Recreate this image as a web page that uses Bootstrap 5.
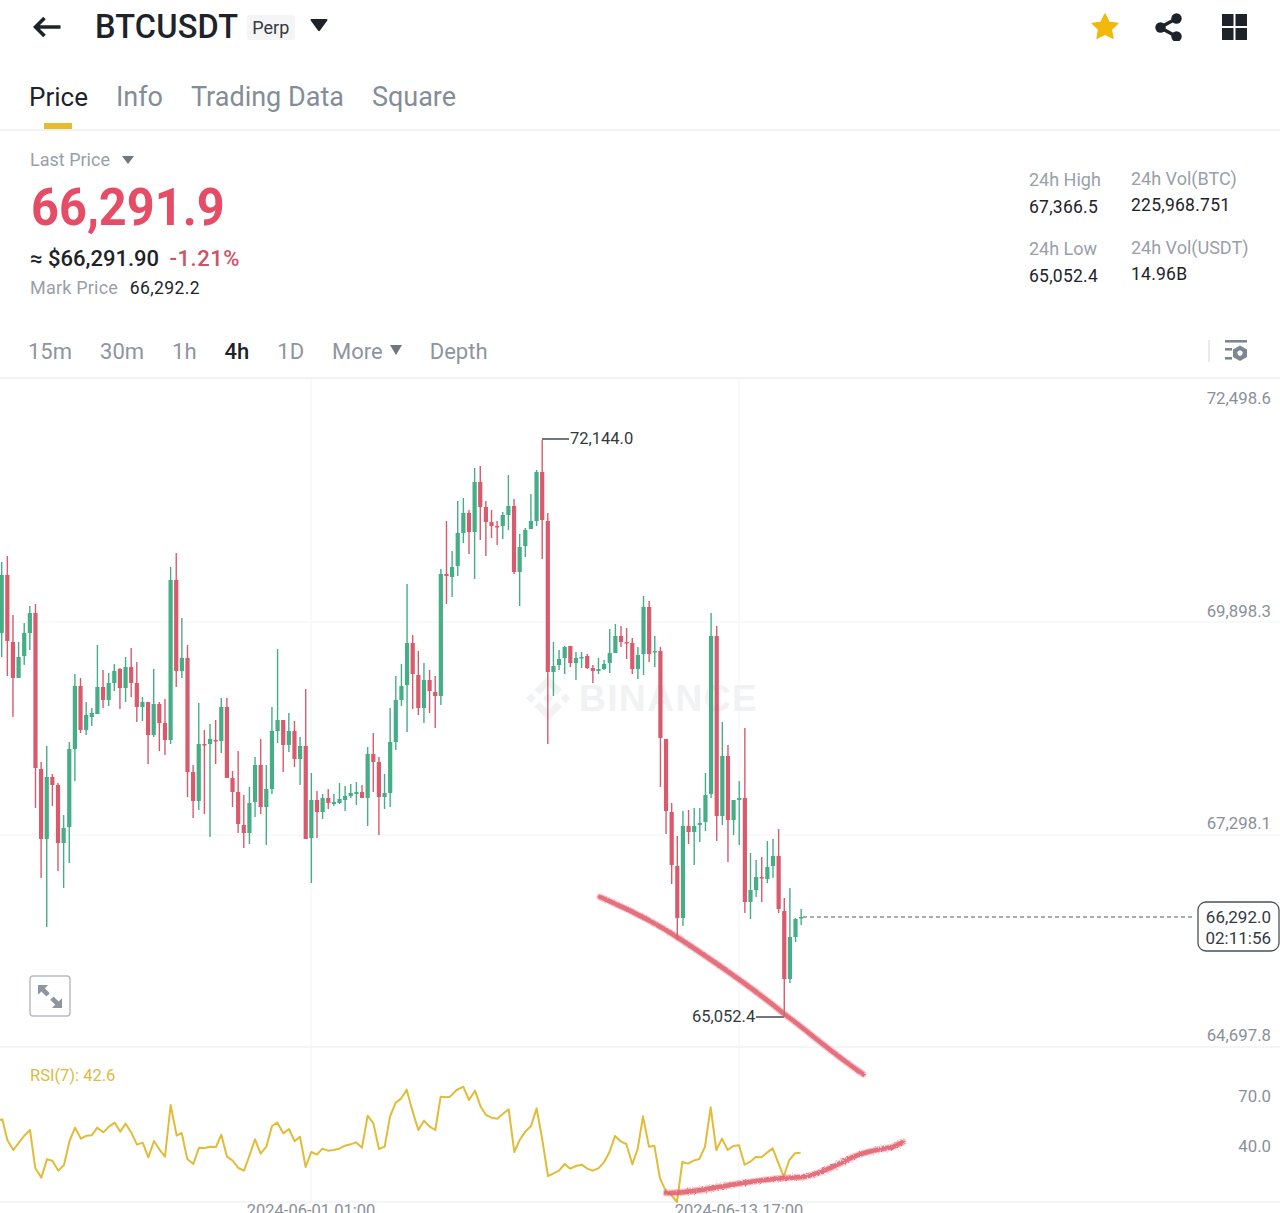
<!doctype html>
<html lang="en">
<head>
<meta charset="utf-8">
<meta name="viewport" content="width=device-width, initial-scale=1">
<title>BTCUSDT Perp</title>
<link href="https://cdn.jsdelivr.net/npm/bootstrap@5.3.5/dist/css/bootstrap.min.css" rel="stylesheet">
<style>
  html, body { height: 1213px; overflow: hidden; }
  body { font-family: Roboto, "Liberation Sans", sans-serif; color: #1e2329; background: #fff; }

  .top-bar { height: 54px; padding-left: 33px; }
  .pair-name { font-size: 32.5px; font-weight: 500; line-height: 1; margin-left: 34px; letter-spacing: .2px; }
  .perp-tag { background: #f5f5f5; color: #333a42; font-size: 18px; font-weight: 400; padding: 4px 6px 4px 5px; margin-left: 9px; border-radius: 3px; line-height: 17px; }
  .title-caret { margin-left: 15px; margin-top: -4px; }
  .top-icons { margin-left: auto; margin-right: 33px; gap: 36px; }
  .grid-icon { margin-left: 3px; }

  .tab-strip { height: 77px; padding-left: 29px; gap: 28px; border-bottom: 2px solid #f1f2f4; }
  .tab-strip .nav-link { padding: 0; margin-top: 25px; height: 36px; font-size: 27px; line-height: 36px; color: #838d99; position: relative; }
  .tab-strip .nav-link.active { color: #1e2329; font-size: 26px; }
  .tab-strip .nav-link.active::after { content: ""; position: absolute; left: 15px; width: 28px; height: 6px; top: 44px; background: #e8bb2e; }

  .price-summary { height: 193px; padding: 19px 30px 0; }
  .last-label { font-size: 18px; line-height: 20px; color: #99a0aa; }
  .last-value { font-size: 51px; font-weight: 700; line-height: 60px; color: #e54c65; margin: 8px 0 0 1px; transform: scaleX(.955); transform-origin: left; }
  .fiat-line { font-size: 22px; font-weight: 500; line-height: 26px; margin-top: 8px; }
  .fiat-change { color: #cf5166; margin-left: 5px; font-weight: 500; letter-spacing: .5px; }
  .mark-line { font-size: 18px; line-height: 24px; margin-top: 4px; color: #99a0aa; letter-spacing: .2px; }
  .mark-value { color: #1e2329; font-size: 17.5px; margin-left: 7px; letter-spacing: .4px; }

  .stat-grid { display: grid; grid-template-columns: 102px 119px; align-content: start; padding-top: 18px; white-space: nowrap; }
  .stat-cell { height: 69px; }
  .stat-label { font-size: 18px; line-height: 24px; color: #99a0aa; }
  .stat-value { font-size: 17.5px; line-height: 24px; margin-top: 3px; letter-spacing: .25px; }
  .stat-alt { margin-top: -1px; }
  .stat-alt .stat-value { margin-top: 2px; }

  .interval-row { height: 55px; padding: 3px 33px 0 28px; border-bottom: 2px solid #f1f2f4; font-size: 22px; color: #8d95a0; }
  .interval-list { gap: 28px; }
  .interval-row span { line-height: 28px; }
  .interval-row .active-interval { color: #1e2329; font-weight: 500; }
  .more-item { gap: 7px; }
  .interval-tools { gap: 15px; margin-top: -3px; }
  .interval-sep { width: 2px; height: 22px; background: #e9ebee; }

  .chart-box { display: block; width: 1280px; height: 834px; }
  .candle-group { filter: blur(.35px); }
  .axis-label { font: 400 16.8px Roboto, sans-serif; fill: #8a9099; text-anchor: end; }
  .tag-label { font: 400 17px Roboto, sans-serif; fill: #333a42; text-anchor: end; }
  .mark-label { font: 400 16.5px Roboto, sans-serif; fill: #333a42; }
  .rsi-label { font: 400 16.5px Roboto, sans-serif; fill: #dcbb40; }
  .date-label { font: 400 16.5px Roboto, sans-serif; fill: #8a9099; text-anchor: middle; }
  .wm-text { font: 700 37px "Liberation Sans", sans-serif; fill: #f1f2f3; letter-spacing: 1.5px; }
</style>
</head>
<body>

<header class="top-bar d-flex align-items-center">
  <svg width="28" height="22" viewBox="0 0 28 22"><path d="M27.5 11H3M11.5 2 2.5 11l9 9" fill="none" stroke="#1e2329" stroke-width="3.6"/></svg>
  <span class="pair-name">BTCUSDT</span>
  <span class="badge perp-tag">Perp</span>
  <svg class="title-caret" width="18" height="14" viewBox="0 0 18 14"><path d="M1.5 1h15a1 1 0 0 1 .8 1.6L10 12.6a1.3 1.3 0 0 1-2 0L.7 2.6A1 1 0 0 1 1.500 1z" fill="#1e2329"/></svg>
  <div class="top-icons d-flex align-items-center">
    <svg width="28" height="28" viewBox="0 0 28 28"><path d="M14 1.2l3.900 8 8.800 1.200-6.400 6.100 1.600 8.700L14 21l-7.900 4.200 1.600-8.700-6.400-6.100 8.800-1.200z" fill="#f0b90b" stroke="#f0b90b" stroke-width="1.500" stroke-linejoin="round"/></svg>
    <svg width="28" height="28" viewBox="0 0 28 28"><path d="M21.500 5.500 5 14.500l16.500 9" fill="none" stroke="#1e2329" stroke-width="3.400"/><circle cx="21.500" cy="5.500" r="5.200" fill="#1e2329"/><circle cx="5.500" cy="14.500" r="5.200" fill="#1e2329"/><circle cx="21.500" cy="23.500" r="5.200" fill="#1e2329"/></svg>
    <svg class="grid-icon" width="25" height="26" viewBox="0 0 25 26" fill="#1e2329"><rect x="0" y="0" width="11.500" height="12"/><rect x="13.500" y="0" width="11.500" height="12"/><rect x="0" y="14" width="11.500" height="12"/><rect x="13.500" y="14" width="11.500" height="12"/></svg>
  </div>
</header>

<ul class="nav tab-strip">
  <li class="nav-item"><a class="nav-link active" href="#">Price</a></li>
  <li class="nav-item"><a class="nav-link" href="#">Info</a></li>
  <li class="nav-item"><a class="nav-link" href="#">Trading Data</a></li>
  <li class="nav-item"><a class="nav-link" href="#">Square</a></li>
</ul>

<section class="price-summary d-flex justify-content-between">
  <div>
    <div class="last-label d-flex align-items-center gap-2">Last Price
      <svg class="ms-1" width="12" height="8" viewBox="0 0 12 8"><path d="M0 0h12L6 8z" fill="#6e7682"/></svg>
    </div>
    <div class="last-value">66,291.9</div>
    <div class="fiat-line">≈ $66,291.90 <span class="fiat-change">-1.21%</span></div>
    <div class="mark-line">Mark Price <span class="mark-value">66,292.2</span></div>
  </div>
  <div class="stat-grid">
    <div class="stat-cell"><div class="stat-label">24h High</div><div class="stat-value">67,366.5</div></div>
    <div class="stat-cell stat-alt"><div class="stat-label">24h Vol(BTC)</div><div class="stat-value">225,968.751</div></div>
    <div class="stat-cell"><div class="stat-label">24h Low</div><div class="stat-value">65,052.4</div></div>
    <div class="stat-cell stat-alt"><div class="stat-label">24h Vol(USDT)</div><div class="stat-value">14.96B</div></div>
  </div>
</section>

<nav class="interval-row d-flex align-items-center justify-content-between">
  <div class="interval-list d-flex align-items-center">
    <span>15m</span>
    <span>30m</span>
    <span>1h</span>
    <span class="active-interval">4h</span>
    <span>1D</span>
    <div class="more-item d-flex align-items-center">
      <span>More</span>
      <svg class="mb-1" width="12" height="10" viewBox="0 0 12 10"><path d="M0 0h12L6 10z" fill="#6e7682"/></svg>
    </div>
    <span>Depth</span>
  </div>
  <div class="interval-tools d-flex align-items-center">
    <div class="interval-sep"></div>
    <svg width="22" height="24" viewBox="0 0 22 24" fill="#7d8794"><rect x="0" y="1" width="22" height="2.600"/><rect x="0" y="9" width="7" height="2.600"/><rect x="0" y="18" width="7" height="2.600"/><path fill-rule="evenodd" d="M15 6.500l7 4v7.500l-7 4-7-4v-7.500zM15 11.500a2.700 2.700 0 1 0 .01 0z"/></svg>
  </div>
</nav>

<svg class="chart-box" id="chart" viewBox="0 379 1280 834">
  <defs>
    <filter id="hand" x="-5%" y="-5%" width="110%" height="110%">
      <feTurbulence type="fractalNoise" baseFrequency=".55" numOctaves="2" seed="4"/>
      <feDisplacementMap in="SourceGraphic" scale="3"/>
    </filter>
  </defs>
  <!-- grid -->
  <g stroke="#f8f8f9" stroke-width="1.500">
    <path d="M311 379V1047M739 379V1047M311 1047V1202M739 1047V1202M0 622H1280M0 835H1280"/>
  </g>
  <g stroke="#f1f2f4" stroke-width="1.500"><path d="M0 1047H1280M0 1202H1280"/></g>

  <!-- watermark -->
  <g transform="translate(526 676) scale(.35)" fill="#f1f2f3">
    <path d="M38.73 53.2l24.59-24.58 24.6 24.6 14.3-14.31L63.32 0 24.42 38.9l14.31 14.3zM0 63.31l14.31-14.31 14.31 14.31-14.31 14.31zM38.73 73.41l24.59 24.59 24.6-24.6 14.31 14.29-38.9 38.91-38.91-38.88-.02-.02zM98.3 63.32l14.31-14.31 14.31 14.3-14.31 14.32zM77.83 63.3L63.32 48.78 52.59 59.51l-1.24 1.23-2.54 2.54 14.51 14.5 14.51-14.47z"/>
  </g>
  <text class="wm-text" x="579" y="711">BINANCE</text>

  <g id="candles" class="candle-group"></g>

  <!-- high / low markers -->
  <path d="M542 439H569M756 1017H784" stroke="#444b53" stroke-width="1.300" fill="none"/>
  <text class="mark-label" x="570" y="444">72,144.0</text>
  <text class="mark-label" x="692" y="1022">65,052.4</text>

  <!-- last price -->
  <path d="M803 917H1194" stroke="#555c64" stroke-width="1.200" stroke-dasharray="4 3"/>
  <rect x="1198" y="902" width="81" height="49" rx="8" fill="#fff" stroke="#4a5158" stroke-width="1.300"/>
  <text class="tag-label" x="1271" y="923">66,292.0</text>
  <text class="tag-label" x="1271" y="944">02:11:56</text>

  <!-- price axis -->
  <text class="axis-label" x="1271" y="404">72,498.6</text>
  <text class="axis-label" x="1271" y="617">69,898.3</text>
  <text class="axis-label" x="1271" y="829">67,298.1</text>
  <text class="axis-label" x="1271" y="1041">64,697.8</text>
  <text class="axis-label" x="1271" y="1102">70.0</text>
  <text class="axis-label" x="1271" y="1152">40.0</text>

  <!-- expand button -->
  <rect x="30" y="976" width="40" height="40" rx="3" fill="#fff" stroke="#b9bdc3" stroke-width="1.500"/>
  <path d="M38 985h10l-3.200 3.200 5 5-3.400 3.400-5-5L38 994.800zM62 1008H52l3.200-3.200-5-5 3.400-3.400 5 5 3.400-3.200z" fill="#8f959e"/>

  <!-- rsi -->
  <text class="rsi-label" x="30" y="1081">RSI(7): 42.6</text>
  <polyline id="rsi" transform="translate(0 1040) scale(.33333)" fill="none" stroke="#e0bc38" stroke-width="6" stroke-linejoin="round"/>

  <!-- hand drawn trend lines -->
  <g fill="none" stroke-linecap="round" stroke-linejoin="round" filter="url(#hand)">
    <path stroke="#e8707d" stroke-opacity=".4" stroke-width="7" d="M600 897C620 906 645 916 677 937S755 990 783 1013C810 1033 835 1055 863 1074"/>
    <path stroke="#e05a6a" stroke-opacity=".8" stroke-width="4.500" d="M600 897C620 906 645 916 677 937S755 990 783 1013C810 1033 835 1055 863 1074"/>
    <path stroke="#e8707d" stroke-opacity=".4" stroke-width="7" d="M666 1193C690 1193 705 1189 743 1183S790 1178 803 1177C825 1173 840 1163 853 1157S880 1149 893 1147L903 1142"/>
    <path stroke="#e05a6a" stroke-opacity=".8" stroke-width="4.500" d="M666 1193C690 1193 705 1189 743 1183S790 1178 803 1177C825 1173 840 1163 853 1157S880 1149 893 1147L903 1142"/>
  </g>

  <text class="date-label" x="311" y="1216">2024-06-01 01:00</text>
  <text class="date-label" x="739" y="1216">2024-06-13 17:00</text>
</svg>

<script>
  // [up?, wick top, body top, body bottom, wick bottom] in page pixels
  const candles = [
    [1,562,575,633,657],[0,556,575,641,676],[0,615,642,678,717],[1,642,657,678,678],[1,623,633,656,665],
    [1,606,613,633,650],[0,604,613,768,808],[0,762,769,839,878],[1,746,777,839,927],[0,774,777,785,806],
    [0,783,785,843,871],[1,815,828,843,888],[1,742,749,827,863],[1,674,686,749,781],[0,678,686,730,733],
    [1,702,715,730,735],[1,708,713,717,726],[1,645,687,714,714],[0,670,687,700,708],[1,673,683,700,706],
    [1,664,671,683,691],[0,668,669,688,709],[1,657,667,688,702],[0,648,667,683,697],[0,662,683,707,722],
    [1,697,702,707,721],[0,702,702,735,764],[1,669,704,735,737],[0,702,704,723,751],[0,699,723,740,755],
    [1,567,580,740,744],[0,553,580,671,687],[1,618,658,671,678],[0,645,658,772,797],[0,765,772,801,818],
    [1,703,744,801,810],[0,730,744,745,814],[1,724,739,744,837],[0,720,740,741,764],[1,698,707,741,753],
    [0,698,707,778,778],[0,771,778,792,807],[0,751,792,824,833],[0,795,825,833,848],[1,787,803,833,844],
    [1,757,765,802,817],[0,739,765,807,814],[1,765,789,807,845],[1,707,731,789,794],[1,649,720,731,743],
    [0,720,720,745,772],[1,713,731,745,752],[0,721,731,759,767],[1,737,746,759,785],[0,689,746,839,839],
    [1,773,800,838,883],[0,791,800,812,838],[1,794,798,812,819],[0,789,798,803,809],[1,794,802,804,806],
    [1,783,799,803,804],[1,786,796,800,811],[1,784,793,796,798],[1,782,792,794,805],[0,785,792,798,798],
    [1,747,754,798,826],[0,733,754,762,792],[0,757,762,797,835],[1,774,793,797,809],[1,708,742,793,807],
    [1,676,700,742,750],[1,664,686,700,706],[1,584,643,685,732],[0,635,643,674,709],[0,651,675,708,715],
    [1,663,680,708,723],[0,670,680,691,713],[0,676,692,696,728],[1,569,574,696,705],[0,521,574,576,604],
    [1,551,567,577,597],[1,501,533,566,576],[1,498,513,533,543],[0,510,513,532,554],[1,468,482,532,579],
    [0,466,482,507,540],[0,501,507,522,556],[0,510,522,526,538],[0,521,526,527,545],[1,512,515,526,539],
    [1,475,506,515,530],[0,499,506,572,574],[1,534,547,572,606],[1,528,530,546,557],[1,494,521,529,529],
    [1,470,472,521,526],[0,440,472,520,559],[0,513,521,672,744],[1,642,666,672,696],[1,650,659,665,670],
    [1,646,647,658,674],[0,646,646,663,667],[1,652,658,663,680],[1,652,657,658,668],[0,654,656,668,669],
    [0,665,668,671,683],[1,658,669,671,674],[1,660,664,669,670],[1,629,653,663,673],[1,624,636,653,653],
    [0,626,636,642,647],[0,628,642,643,659],[0,638,643,669,674],[1,647,655,669,679],[1,596,607,654,675],
    [0,601,607,654,662],[1,636,651,652,667],[0,647,651,738,787],[0,739,739,811,834],[0,803,812,865,884],
    [0,836,866,918,940],[1,811,826,918,926],[0,810,826,832,844],[1,808,826,832,865],[1,808,823,825,842],
    [1,773,795,822,831],[1,613,636,794,798],[0,626,636,816,841],[1,722,756,816,825],[0,745,756,820,862],
    [1,800,800,820,835],[1,781,798,800,845],[0,728,798,902,913],[1,853,890,902,919],[1,860,877,890,897],
    [0,857,877,878,902],[1,841,867,879,883],[1,839,856,866,878],[0,829,856,909,913],[0,898,911,979,1017],
    [1,888,937,979,983],[1,918,919,937,942],[1,909,917,918,925]
  ];
  let parts = '';
  candles.forEach((c, i) => {
    const x = 1.7 + i * 5.63;
    const col = c[0] ? '#45ae86' : '#d95a6d';
    parts += `<rect x="${(x - 0.7).toFixed(2)}" y="${c[1]}" width="1.4" height="${c[4] - c[1]}" fill="${col}"/>`;
    parts += `<rect x="${(x - 2.1).toFixed(2)}" y="${c[2]}" width="4.2" height="${Math.max(c[3] - c[2], 1.5)}" fill="${col}"/>`;
  });
  document.querySelector('#candles').innerHTML = parts;

  // rsi traced on a 3x grid, second half starts at x = 450
  const rsiLeft = [[0,240],[7,238],[22,300],[40,330],[55,310],[72,288],[90,270],[106,385],[124,413],[141,358],[157,362],[175,392],[192,375],[208,305],[225,263],[243,296],[260,287],[275,286],[292,263],[310,277],[327,260],[344,248],[361,275],[377,251],[395,280],[411,314],[428,308],[445,352],[462,303],[478,328],[495,350],[512,195],[530,287],[545,279],[562,357],[580,372],[597,323],[614,324],[631,320],[648,321],[664,284],[681,350],[698,362],[715,384],[732,392],[749,345],[765,298],[782,341],[799,320],[816,258],[832,248],[850,280],[867,267],[884,304],[900,290],[917,381],[934,336],[951,344],[967,326],[984,332],[1001,330],[1018,326],[1035,317],[1052,313],[1068,307],[1086,323],[1103,227],[1120,250],[1137,327],[1154,320],[1170,230],[1187,188],[1204,175],[1220,149],[1238,215],[1255,270],[1272,242],[1289,260],[1306,270],[1322,170],[1339,172]];
  const rsiRight = [[0,170],[20,150],[40,140],[57,180],[75,152],[92,200],[108,225],[125,233],[142,236],[158,222],[176,208],[193,336],[209,300],[226,275],[243,258],[260,205],[277,300],[294,408],[311,400],[327,392],[344,372],[361,386],[378,378],[395,374],[412,386],[428,392],[445,385],[462,367],[479,335],[495,288],[512,304],[529,312],[547,373],[563,327],[579,229],[597,320],[613,317],[630,415],[647,452],[664,465],[681,486],[697,366],[714,371],[731,362],[748,357],[765,320],[782,202],[799,330],[816,296],[833,330],[850,318],[867,316],[884,374],[901,365],[917,351],[934,352],[951,338],[968,325],[1001,410],[1018,360],[1035,340],[1052,338]];
  const rsiPts = rsiLeft.concat(rsiRight.map(p => [p[0] + 1350, p[1]]));
  document.querySelector('#rsi').setAttribute('points', rsiPts.map(p => p.join(',')).join(' '));
</script>
<script src="https://cdn.jsdelivr.net/npm/bootstrap@5.3.5/dist/js/bootstrap.bundle.min.js"></script>
</body>
</html>
